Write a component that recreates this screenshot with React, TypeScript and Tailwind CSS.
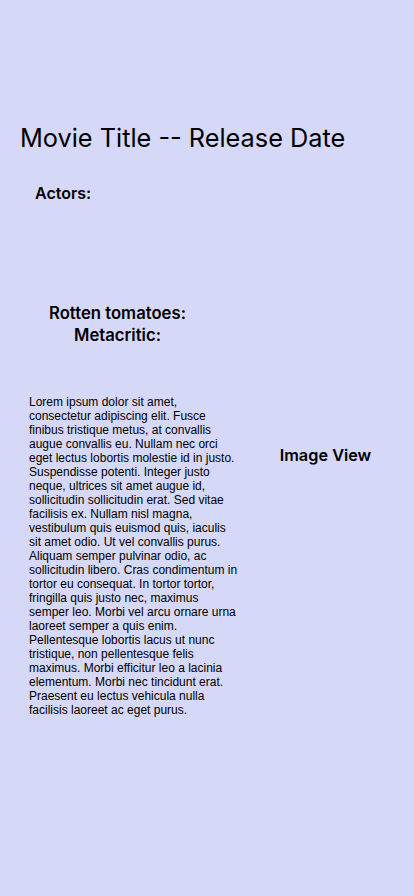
export default function App() {
  const lorem =
    "Lorem ipsum dolor sit amet, consectetur adipiscing elit. Fusce finibus tristique metus, at convallis augue convallis eu. Nullam nec orci eget lectus lobortis molestie id in justo. Suspendisse potenti. Integer justo neque, ultrices sit amet augue id, sollicitudin sollicitudin erat. Sed vitae facilisis ex. Nullam nisl magna, vestibulum quis euismod quis, iaculis sit amet odio. Ut vel convallis purus. Aliquam semper pulvinar odio, ac sollicitudin libero. Cras condimentum in tortor eu consequat. In tortor tortor, fringilla quis justo nec, maximus semper leo. Morbi vel arcu ornare urna laoreet semper a quis enim. Pellentesque lobortis lacus ut nunc tristique, non pellentesque felis maximus. Morbi efficitur leo a lacinia elementum. Morbi nec tincidunt erat. Praesent eu lectus vehicula nulla facilisis laoreet ac eget purus.";
  return (
    <div className="w-[414px] h-[896px] bg-[#d6d8f7] text-black overflow-hidden" style={{ fontFamily: "Inter, 'Noto Sans', sans-serif" }}>
      <div className="pt-[121px] pl-[20px]">
        <h1 className="text-[25.3px] leading-[34px] font-normal">Movie Title -- Release Date</h1>
      </div>
      <div className="pl-[35px] mt-[27px]">
        <div className="text-[16px] leading-[22px] font-semibold">Actors:</div>
      </div>
      <div className="mt-[98px] w-[235px] flex flex-col items-center text-[16.7px] leading-[22px] font-semibold">
        <div>Rotten tomatoes:</div>
        <div>Metacritic:</div>
      </div>
      <div className="mt-[49px] flex">
        <p className="ml-[29px] w-[212px] text-[12px] leading-[14px]" style={{ fontFamily: "'Liberation Sans', Arial, sans-serif" }}>
          {lorem}
        </p>
        <div className="flex-1 pt-[49px] flex justify-center pr-[4px]">
          <div className="text-[16.3px] leading-[22px] font-semibold">Image View</div>
        </div>
      </div>
    </div>
  );
}
